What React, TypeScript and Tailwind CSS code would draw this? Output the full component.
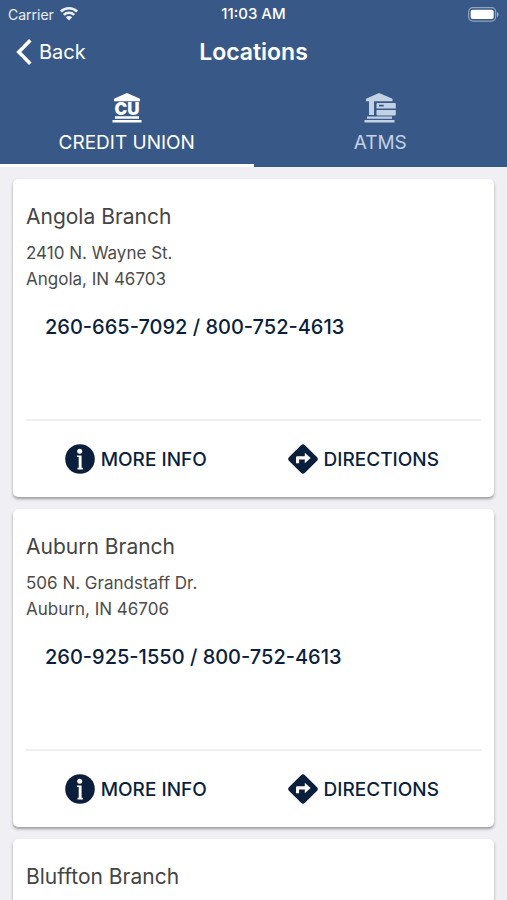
import * as React from 'react'
import { clsx } from 'clsx'

interface Branch {
  id: string
  name: string
  address: string[]
  phones: string[]
}

const BRANCHES: Branch[] = [
  {
    id: 'angola',
    name: 'Angola Branch',
    address: ['2410 N. Wayne St.', 'Angola, IN 46703'],
    phones: ['260-665-7092', '800-752-4613'],
  },
  {
    id: 'auburn',
    name: 'Auburn Branch',
    address: ['506 N. Grandstaff Dr.', 'Auburn, IN 46706'],
    phones: ['260-925-1550', '800-752-4613'],
  },
  { id: 'bluffton', name: 'Bluffton Branch', address: [], phones: [] },
]

function WifiIcon() {
  return (
    <svg viewBox="0 0 18 14" className="h-3.5 w-[18px]" fill="currentColor" aria-hidden>
      <path d="M9 0C5.600 0 2.400 1.300 0 3.600L1.800 5.400A10.400 10.400 0 0 1 16.200 5.400L18 3.600A13 13 0 0 0 9 0Z" />
      <path d="M9 4.600A9 9 0 0 0 2.900 7L4.700 8.800A6.300 6.300 0 0 1 13.300 8.800L15.100 7A9 9 0 0 0 9 4.600Z" />
      <path d="M9 9.100A4.600 4.600 0 0 0 5.800 10.300L9 13.600L12.200 10.300A4.600 4.600 0 0 0 9 9.100Z" />
    </svg>
  )
}

function BatteryIcon() {
  return (
    <svg viewBox="0 0 31 15" className="h-[15px] w-[31px]" aria-hidden>
      <rect x="0.700" y="0.700" width="27" height="13.400" rx="4" fill="none" stroke="#fff" strokeOpacity="0.450" strokeWidth="1.200" />
      <rect x="2.700" y="2.700" width="23" height="9.400" rx="2" fill="#fff" />
      <path d="M29 5v5c1-.4 1.600-1.400 1.600-2.500S30 5.400 29 5Z" fill="#fff" fillOpacity="0.500" />
    </svg>
  )
}

function BackIcon() {
  return (
    <svg viewBox="0 0 16 26" className="h-[26px] w-4" fill="none" stroke="currentColor" strokeWidth="3.600" aria-hidden>
      <path d="M14.300 1.300 2.800 13l11.500 11.700" />
    </svg>
  )
}

function CreditUnionIcon() {
  return (
    <svg viewBox="0 0 30 30" className="size-[30px]" fill="currentColor" aria-hidden>
      <path d="M15 0 28 5.700V8.200H2V5.700Z" />
      <text x="15" y="21.800" textAnchor="middle" fontFamily="Inter, sans-serif" fontSize="17" fontWeight="900">
        CU
      </text>
      <path d="M3 23.200h24v2.500H3zM.5 27h29v2.600H.5z" />
    </svg>
  )
}

function AtmIcon() {
  return (
    <svg viewBox="0 0 33 30" className="h-[30px] w-[33px]" fill="currentColor" aria-hidden>
      <path d="M15 0 28.500 5.800V8.300H2V5.800Z" />
      <path d="M5 8h5v14H5z" />
      <path fillRule="evenodd" d="M13.500 10h17.300q1 0 1 1v4.600H12.500V11q0-1 1-1Zm1.500 1.700v1.800h4.700v-1.800Z" />
      <path d="M12.500 17h19.300v4.400q0 1-1 1H13.500q-1 0-1-1Z" />
      <path d="M3 23.500h25v2.300H3zM.5 27h30v2.600H.5z" />
    </svg>
  )
}

function InfoIcon() {
  return (
    <svg viewBox="0 0 30 30" className="size-[30px]" aria-hidden>
      <circle cx="15" cy="15" r="14.800" fill="#0b1f3d" />
      <circle cx="14.700" cy="7.300" r="2.500" fill="#fff" />
      <path d="M11.900 11.500h4.700v12.300h1.300v1.600h-5.400v-1.600h1.200V13.100h-1.800Z" fill="#fff" />
    </svg>
  )
}

function DirectionsIcon() {
  return (
    <svg viewBox="0 0 30 30" className="size-[30px]" aria-hidden>
      <rect x="3.800" y="3.800" width="22.400" height="22.400" rx="2.800" transform="rotate(45 15 15)" fill="#0b1f3d" />
      <path d="M8 19.200v-5.700q0-1.300 1.300-1.300h7.500V8.800L22.600 14l-5.800 5.200v-3.800h-5.700v3.800Z" fill="#fff" />
    </svg>
  )
}

const TABS = [
  { id: 'cu', label: 'CREDIT UNION', icon: CreditUnionIcon },
  { id: 'atms', label: 'ATMS', icon: AtmIcon },
]

function BranchCard({ branch }: { branch: Branch }) {
  return (
    <article className="flex min-h-[318px] shrink-0 flex-col rounded-[5px] bg-white px-[13px] pt-6 shadow-[0_2px_3px_rgba(0,0,0,0.35)]">
      <h2 className="text-[21px] leading-7 text-[#444]">{branch.name}</h2>
      <address className="mt-[9px] text-[17px] leading-[26px] text-[#4c4c4c] not-italic">
        {branch.address.map((line) => (
          <p key={line}>{line}</p>
        ))}
      </address>
      <p className="mt-[21px] px-[19px] text-[20px] leading-7 font-medium">
        {branch.phones.map((phone, i) => (
          <React.Fragment key={phone}>
            {i > 0 && ' / '}
            <a href={`tel:${phone}`}>{phone}</a>
          </React.Fragment>
        ))}
      </p>
      {branch.phones.length > 0 && (
        <div className="mt-auto grid h-[78px] grid-cols-2 border-t-2 border-[#efeff1] text-[19px] font-medium">
          <button className="flex items-center justify-center gap-1.5 pr-2">
            <InfoIcon />
            <span className="pt-0.5">MORE INFO</span>
          </button>
          <button className="flex items-center justify-center gap-1.5 pr-2">
            <DirectionsIcon />
            <span className="pt-0.5">DIRECTIONS</span>
          </button>
        </div>
      )}
    </article>
  )
}

export default function App() {
  const [tab, setTab] = React.useState('cu')

  return (
    <div className="flex h-screen flex-col bg-[#efeff4] font-['Inter',sans-serif] text-[#0b1f3d]">
      <header className="shrink-0 bg-[#385988] text-white">
        <div className="grid h-7 grid-cols-3 items-center px-2 text-[14px]">
          <span className="flex items-center gap-1.5 text-white/90">
            Carrier
            <WifiIcon />
          </span>
          <span className="text-center text-[15px] font-medium">11:03 AM</span>
          <span className="flex justify-end">
            <BatteryIcon />
          </span>
        </div>

        <div className="grid h-12 grid-cols-3 items-center px-4">
          <button className="flex items-center gap-[7px] text-[20px]">
            <BackIcon />
            Back
          </button>
          <h1 className="text-center text-[23px] font-semibold">Locations</h1>
        </div>

        <nav className="grid grid-cols-2" role="tablist">
          {TABS.map(({ id, label, icon: Icon }) => (
            <button
              key={id}
              role="tab"
              aria-selected={tab === id}
              onClick={() => setTab(id)}
              className={clsx(
                'flex h-[91px] flex-col items-center border-b-[3px] pt-[17px] text-[19px] leading-7',
                tab === id ? 'border-white text-white' : 'border-transparent text-[#c3d1e4]',
              )}
            >
              <Icon />
              <span className="mt-1.5">{label}</span>
            </button>
          ))}
        </nav>
      </header>

      <main className="flex flex-1 flex-col gap-3 overflow-y-auto px-[13px] py-3 [scrollbar-width:none]">
        {BRANCHES.map((branch) => (
          <BranchCard key={branch.id} branch={branch} />
        ))}
      </main>
    </div>
  )
}
